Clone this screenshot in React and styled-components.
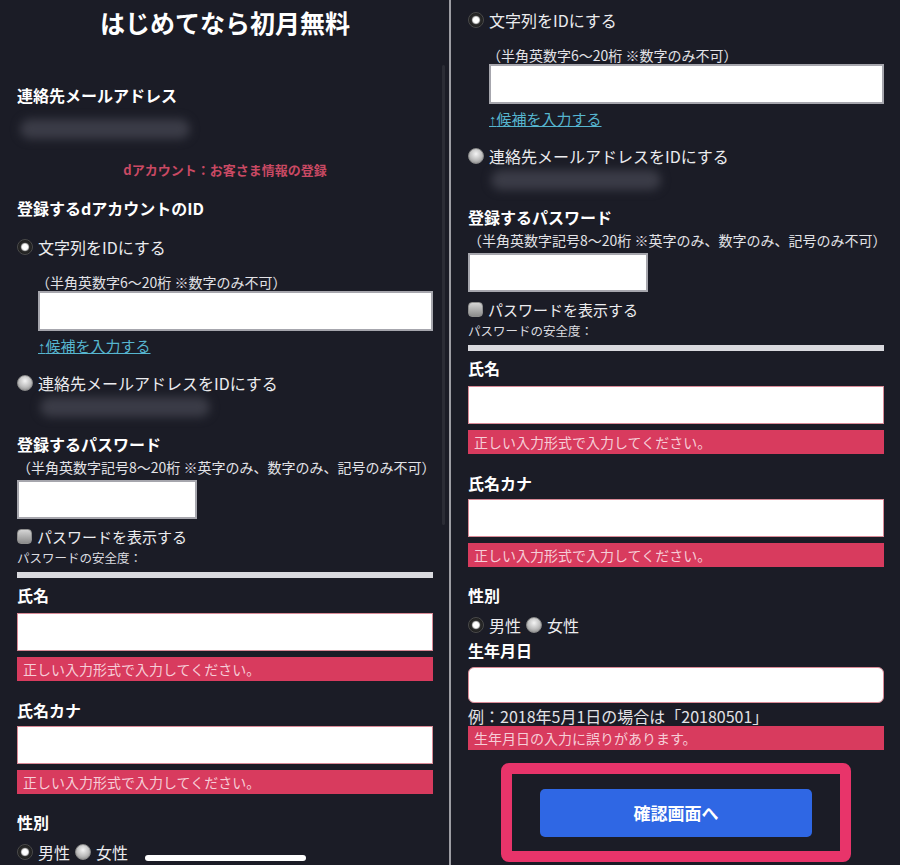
import React, { useLayoutEffect, useRef } from 'react';
import styled, { createGlobalStyle } from 'styled-components';

const GlobalStyle = createGlobalStyle`
  html, body {
    margin: 0;
    padding: 0;
    background: #1b1c26;
    overflow: hidden;
  }
  body {
    font-family: "Noto Sans CJK JP", "Noto Sans", sans-serif;
  }
`;

const Screen = styled.div`
  display: flex;
  width: 900px;
  height: 865px;
  background: #1b1c26;
`;

const Phone = styled.div`
  position: relative;
  flex: 0 0 449px;
  height: 865px;
  overflow: hidden;
`;

const Divider = styled.div`
  flex: 0 0 2px;
  background: #9d9da3;
`;

const ScrollThumb = styled.div`
  position: absolute;
  top: 65px;
  right: 4px;
  width: 3px;
  height: 460px;
  border-radius: 2px;
  background: rgba(255, 255, 255, 0.07);
`;

const HomeBar = styled.div`
  position: absolute;
  left: 50%;
  bottom: 4px;
  width: 161px;
  height: 6px;
  margin-left: -80px;
  border-radius: 3px;
  background: #fff;
`;

const Form = styled.div`
  padding: 0 16px 60px 17px;
  color: #e9e9ec;
`;

const Title = styled.h1`
  margin: 0;
  font-size: 25px;
  line-height: 44px;
  font-weight: 700;
  text-align: center;
  color: #fff;
`;

const Heading = styled.div`
  margin-top: ${({ $mt }) => $mt}px;
  font-size: 16px;
  line-height: 24px;
  font-weight: 700;
  color: #fff;
`;

const Blurred = styled.div`
  margin: ${({ $mt }) => $mt}px 0 0 ${({ $indent }) => $indent}px;
  width: ${({ $w }) => $w}px;
  height: 20px;
  border-radius: 10px;
  background: #3b3c47;
  filter: blur(5px);
`;

const Caption = styled.div`
  margin-top: ${({ $mt }) => $mt}px;
  font-size: 13px;
  line-height: 18px;
  font-weight: 700;
  text-align: center;
  color: #c94963;
`;

const OptionRow = styled.label`
  display: flex;
  align-items: center;
  gap: 5px;
  margin-top: ${({ $mt }) => $mt}px;
  height: ${({ $h }) => $h || 24}px;
  font-size: ${({ $size }) => $size || 16}px;
  color: #ececef;
`;

const Radio = styled.span`
  flex: 0 0 auto;
  width: 16px;
  height: 16px;
  border-radius: 50%;
  box-sizing: border-box;
  background: ${({ $checked }) =>
    $checked
      ? 'radial-gradient(circle, #fff 0 2.6px, #cfcfcf 3.4px, #2c2c2c 4.6px, #0b0b0b 100%)'
      : 'radial-gradient(circle at 50% 35%, #f4f4f4, #bcbcbc 55%, #7a7a7a 100%)'};
  border: 1px solid ${({ $checked }) => ($checked ? '#4a4a4a' : '#8a8a8a')};
`;

const Checkbox = styled.span`
  flex: 0 0 auto;
  width: 15px;
  height: 15px;
  border-radius: 4px;
  box-sizing: border-box;
  border: 1px solid #8e8e8e;
  background: linear-gradient(#d4d4d4, #8c8c8c);
`;

const Hint = styled.div`
  margin: ${({ $mt }) => $mt}px 0 0 ${({ $indent }) => $indent || 0}px;
  font-size: 14px;
  line-height: 18px;
  color: #e2e2e6;
  white-space: nowrap;
`;

const Field = styled.input`
  display: block;
  box-sizing: border-box;
  margin: ${({ $mt }) => $mt}px 0 0 ${({ $indent }) => $indent || 0}px;
  width: ${({ $w, $indent }) => ($w ? `${$w}px` : `calc(100% - ${$indent || 0}px)`)};
  height: ${({ $h }) => $h}px;
  padding: 0 8px;
  background: #fff;
  border: ${({ $error }) => ($error ? '1px solid #d98a96' : '2px solid #a6a6ad')};
  border-radius: ${({ $round }) => ($round ? '6px' : '0')};
  outline: none;
  font: inherit;
`;

const SuggestLink = styled.a`
  display: block;
  width: max-content;
  margin: ${({ $mt }) => $mt}px 0 0 21px;
  font-size: 15px;
  line-height: 20px;
  color: #56b5cf;
  text-decoration: underline;
`;

const Arrow = styled.span`
  font-family: "Liberation Sans", "DejaVu Sans", sans-serif;
`;

const StrengthLabel = styled.div`
  margin-top: ${({ $mt }) => $mt}px;
  font-size: 12.5px;
  line-height: 16px;
  color: #dcdce0;
`;

const StrengthBar = styled.div`
  margin-top: ${({ $mt }) => $mt}px;
  height: 6px;
  background: #d9d9de;
`;

const ErrorBox = styled.div`
  margin-top: ${({ $mt }) => $mt}px;
  height: 24px;
  padding-left: 6px;
  background: #d83b5e;
  color: #f6cdd7;
  font-size: 14px;
  line-height: 24px;
`;

const GenderRow = styled.div`
  display: flex;
  align-items: center;
  gap: 5px;
  margin-top: ${({ $mt }) => $mt}px;
  height: 22px;
  font-size: 16px;
  color: #ececef;
`;

const Example = styled.div`
  margin-top: ${({ $mt }) => $mt}px;
  font-size: 16px;
  line-height: 20px;
  color: #e2e2e6;
`;

const Highlight = styled.div`
  display: flex;
  align-items: center;
  justify-content: center;
  box-sizing: border-box;
  width: 350px;
  height: 99px;
  margin: ${({ $mt }) => $mt}px auto 0;
  border: 11px solid #e8346a;
  border-radius: 8px;
`;

const SubmitButton = styled.button`
  width: 272px;
  height: 48px;
  border: none;
  border-radius: 5px;
  background: #2f67e4;
  color: #fff;
  font-family: inherit;
  font-size: 17px;
  font-weight: 700;
`;

const RegistrationForm = () => (
  <Form>
    <Title>はじめてなら初月無料</Title>
    <Heading $mt={39}>連絡先メールアドレス</Heading>
    <Blurred $mt={12} $indent={3} $w={170} />
    <Caption $mt={22}>dアカウント：お客さま情報の登録</Caption>

    <Heading $mt={17}>登録するdアカウントのID</Heading>
    <OptionRow $mt={15}>
      <Radio $checked />
      文字列をIDにする
    </OptionRow>
    <Hint $mt={14} $indent={19}>（半角英数字6〜20桁 ※数字のみ不可）</Hint>
    <Field $mt={0} $indent={21} $h={40} readOnly />
    <SuggestLink $mt={5} href="#"><Arrow>↑</Arrow>候補を入力する</SuggestLink>
    <OptionRow $mt={14}>
      <Radio />
      連絡先メールアドレスをIDにする
    </OptionRow>
    <Blurred $mt={2} $indent={23} $w={170} />

    <Heading $mt={15}>登録するパスワード</Heading>
    <Hint $mt={2}>（半角英数字記号8〜20桁 ※英字のみ、数字のみ、記号のみ不可）</Hint>
    <Field $mt={4} $w={180} $h={39} readOnly />
    <OptionRow $mt={6} $h={22} $size={15}>
      <Checkbox />
      パスワードを表示する
    </OptionRow>
    <StrengthLabel $mt={3}>パスワードの安全度：</StrengthLabel>
    <StrengthBar $mt={6} />

    <Heading $mt={5}>氏名</Heading>
    <Field $mt={6} $h={38} $error readOnly />
    <ErrorBox $mt={6}>正しい入力形式で入力してください。</ErrorBox>

    <Heading $mt={17}>氏名カナ</Heading>
    <Field $mt={4} $h={38} $error readOnly />
    <ErrorBox $mt={6}>正しい入力形式で入力してください。</ErrorBox>

    <Heading $mt={16}>性別</Heading>
    <GenderRow $mt={7}>
      <Radio $checked />
      男性
      <Radio />
      女性
    </GenderRow>

    <Heading $mt={2}>生年月日</Heading>
    <Field $mt={5} $h={36} $error $round readOnly />
    <Example $mt={3}>例：2018年5月1日の場合は「20180501」</Example>
    <ErrorBox $mt={0}>生年月日の入力に誤りがあります。</ErrorBox>

    <Highlight $mt={13}>
      <SubmitButton type="button">確認画面へ</SubmitButton>
    </Highlight>
  </Form>
);

const ScrolledPhone = ({ offset }) => {
  const ref = useRef(null);
  useLayoutEffect(() => {
    if (ref.current) ref.current.scrollTop = offset;
  }, [offset]);
  return (
    <Phone ref={ref}>
      <RegistrationForm />
    </Phone>
  );
};

export default function App() {
  return (
    <>
      <GlobalStyle />
      <Screen>
        <Phone>
          <RegistrationForm />
          <ScrollThumb />
          <HomeBar />
        </Phone>
        <Divider />
        <ScrolledPhone offset={227} />
      </Screen>
    </>
  );
}
